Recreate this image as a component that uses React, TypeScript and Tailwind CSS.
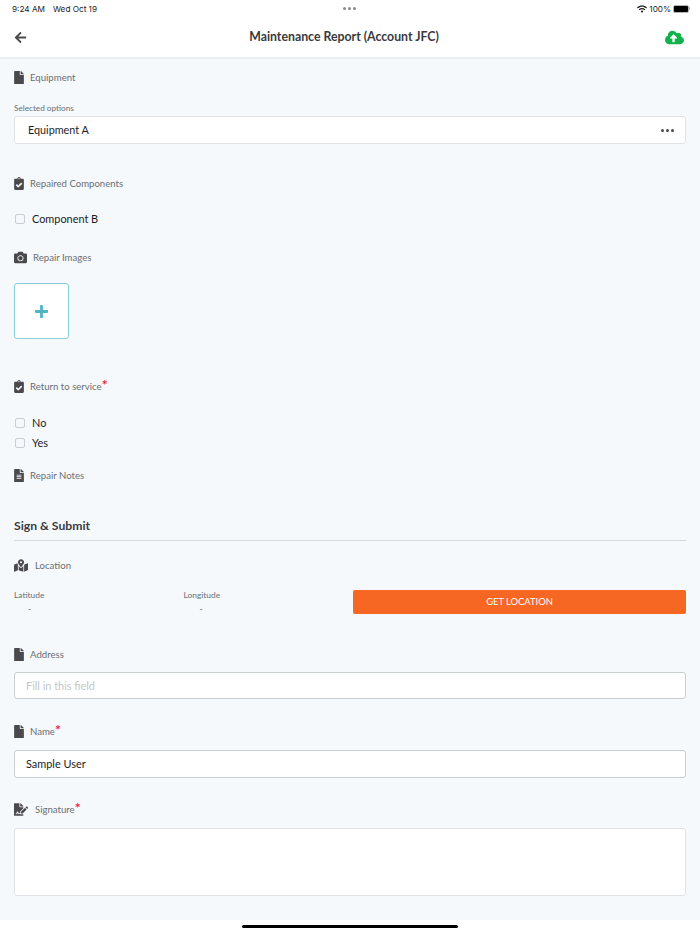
import { FaArrowLeft, FaCamera, FaClipboardCheck, FaCloudUploadAlt, FaFile, FaFileAlt, FaFileSignature, FaMapMarkedAlt, FaPlus, FaWifi } from 'react-icons/fa'
import type { ReactNode } from 'react'

function Label({ icon, gap, children, required, className }: { icon: ReactNode; gap: string; children: string; required?: boolean; className: string }) {
  return (
    <div className={`flex items-center h-5 text-[9.6px] text-[#6a6f74] ${className}`}>
      <span className={`flex items-center -mt-[1px] text-[#4a4a4c] ${gap}`}>{icon}</span>
      <span>{children}</span>
      {required && <span className="text-[#f0233f] text-[14px] leading-none -mt-[5px] font-bold">*</span>}
    </div>
  )
}

function Check({ label, className }: { label: string; className: string }) {
  return (
    <div className={`flex items-center h-5 ${className}`}>
      <span className="w-[8px] h-[8px] ml-[1px] box-content border border-[#c9ced3] rounded-[2px] bg-[#f6f9fc]" />
      <span className="text-[10.9px] text-[#1c1c1e] ml-[7px]">{label}</span>
    </div>
  )
}

export default function App() {
  return (
    <div className="w-[700px] h-[934px] bg-white flex flex-col overflow-hidden font-['Lato',sans-serif]">
      <div className="h-4 flex items-center justify-between pl-3 pr-[10px] relative top-[1px] text-[8.2px] text-[#1c1c1e] font-['Inter',sans-serif]">
        <div className="flex gap-2">
          <span>9:24 AM</span>
          <span>Wed Oct 19</span>
        </div>
        <div className="absolute left-[343px] top-[6px] flex gap-[2px]">
          <span className="w-[3px] h-[3px] rounded-full bg-[#8a8a8a]" />
          <span className="w-[3px] h-[3px] rounded-full bg-[#8a8a8a]" />
          <span className="w-[3px] h-[3px] rounded-full bg-[#8a8a8a]" />
        </div>
        <div className="flex items-center">
          <FaWifi className="w-[10px] h-[10px] mr-[2px]" />
          <span>100%</span>
          <span className="ml-[2px] w-[16px] h-[8px] bg-black rounded-[2px] border border-[#b5b5b5]" />
          <span className="w-[1px] h-[3px] bg-[#b5b5b5]" />
        </div>
      </div>

      <div className="h-[40px] border-b-2 border-[#ebeef1] box-content flex items-center justify-between pl-[14px] pr-[16px] pt-[7px] -mt-[6px]">
        <FaArrowLeft className="w-[13px] h-[13px] text-[#4a4a4c]" />
        <span className="text-[12.3px] font-bold text-[#3a3a3c] mr-[4px]">Maintenance Report (Account JFC)</span>
        <FaCloudUploadAlt className="w-[19px] h-[19px] text-[#12b24a]" />
      </div>

      <div className="h-[861px] bg-[#f6f9fc] px-[14px] flex flex-col">
        <Label icon={<FaFile className="w-[10px] h-[13px]" />} gap="mr-[6px]" className="mt-[9px]">Equipment</Label>

        <div className="mt-[13px] h-[14px] flex items-center text-[8.2px] text-[#6a6f74]">Selected options</div>
        <div className="mt-[1px] h-[28px] bg-white border border-[#dfe3e7] rounded-[3px] flex items-center justify-between pl-[13px] pr-[11px]">
          <span className="text-[10.8px] text-[#1c1c1e]">Equipment A</span>
          <div className="flex gap-[2px]">
            <span className="w-[3px] h-[3px] rounded-full bg-[#4a4a4c]" />
            <span className="w-[3px] h-[3px] rounded-full bg-[#4a4a4c]" />
            <span className="w-[3px] h-[3px] rounded-full bg-[#4a4a4c]" />
          </div>
        </div>

        <Label icon={<FaClipboardCheck className="w-[10px] h-[13px]" />} gap="mr-[6px]" className="mt-[30px]">Repaired Components</Label>
        <Check label="Component B" className="mt-[15px]" />
        <Label icon={<FaCamera className="w-[13px] h-[13px]" />} gap="mr-[6px]" className="mt-[19px]">Repair Images</Label>

        <div className="mt-[15px] w-[55px] h-[56px] bg-white border border-[#86d0da] rounded-[3px] flex items-center justify-center">
          <FaPlus className="w-[15px] h-[15px] text-[#4fb5c5]" />
        </div>

        <Label icon={<FaClipboardCheck className="w-[10px] h-[13px]" />} gap="mr-[6px]" required className="mt-[38px]">Return to service</Label>
        <Check label="No" className="mt-[16px]" />
        <Check label="Yes" className="mt-[0px]" />
        <Label icon={<FaFileAlt className="w-[10px] h-[13px]" />} gap="mr-[6px]" className="mt-[13px]">Repair Notes</Label>

        <div className="mt-[30px] h-5 flex items-center text-[12.2px] font-bold text-[#3a3a3c]">Sign &amp; Submit</div>
        <div className="mt-[4px] h-px bg-[#d5d9dd]" />

        <Label icon={<FaMapMarkedAlt className="w-[14px] h-[13px]" />} gap="mr-[7px]" className="mt-[15px]">Location</Label>

        <div className="flex mt-[14px] h-[38px]">
          <div className="w-[169.5px] text-[8.4px] text-[#6a6f74]">
            <div className="h-[10px] leading-[10px]">Latitude</div>
            <div className="mt-[4px] pl-[14px] leading-[10px] text-[#3a3a3c]">-</div>
          </div>
          <div className="w-[169.5px] text-[8.4px] text-[#6a6f74]">
            <div className="h-[10px] leading-[10px]">Longitude</div>
            <div className="mt-[4px] pl-[16px] leading-[10px] text-[#3a3a3c]">-</div>
          </div>
          <div className="flex-1 h-[24px] bg-[#f76724] rounded-[2px] flex items-center justify-center text-[9.4px] text-white">GET LOCATION</div>
        </div>

        <Label icon={<FaFile className="w-[10px] h-[13px]" />} gap="mr-[6px]" className="mt-[17px]">Address</Label>
        <div className="mt-[7px] h-[27px] bg-white border border-[#c9ced3] rounded-[3px] flex items-center pl-[11px] pt-[1px] text-[10.9px] text-[#c4c7ca]">Fill in this field</div>

        <Label icon={<FaFile className="w-[10px] h-[13px]" />} gap="mr-[6px]" required className="mt-[23px]">Name</Label>
        <div className="mt-[8px] h-[28px] bg-white border border-[#c9ced3] rounded-[3px] flex items-center pl-[11px] text-[10.9px] text-[#1c1c1e]">Sample User</div>

        <Label icon={<FaFileSignature className="w-[14px] h-[13px]" />} gap="mr-[7px]" required className="mt-[22px]">Signature</Label>
        <div className="mt-[8px] h-[68px] bg-white border border-[#dfe3e7] rounded-[3px]" />
      </div>

      <div className="flex-1 relative">
        <div className="absolute left-[242px] top-[5px] w-[216px] h-[3px] bg-black rounded-full" />
      </div>
    </div>
  )
}
